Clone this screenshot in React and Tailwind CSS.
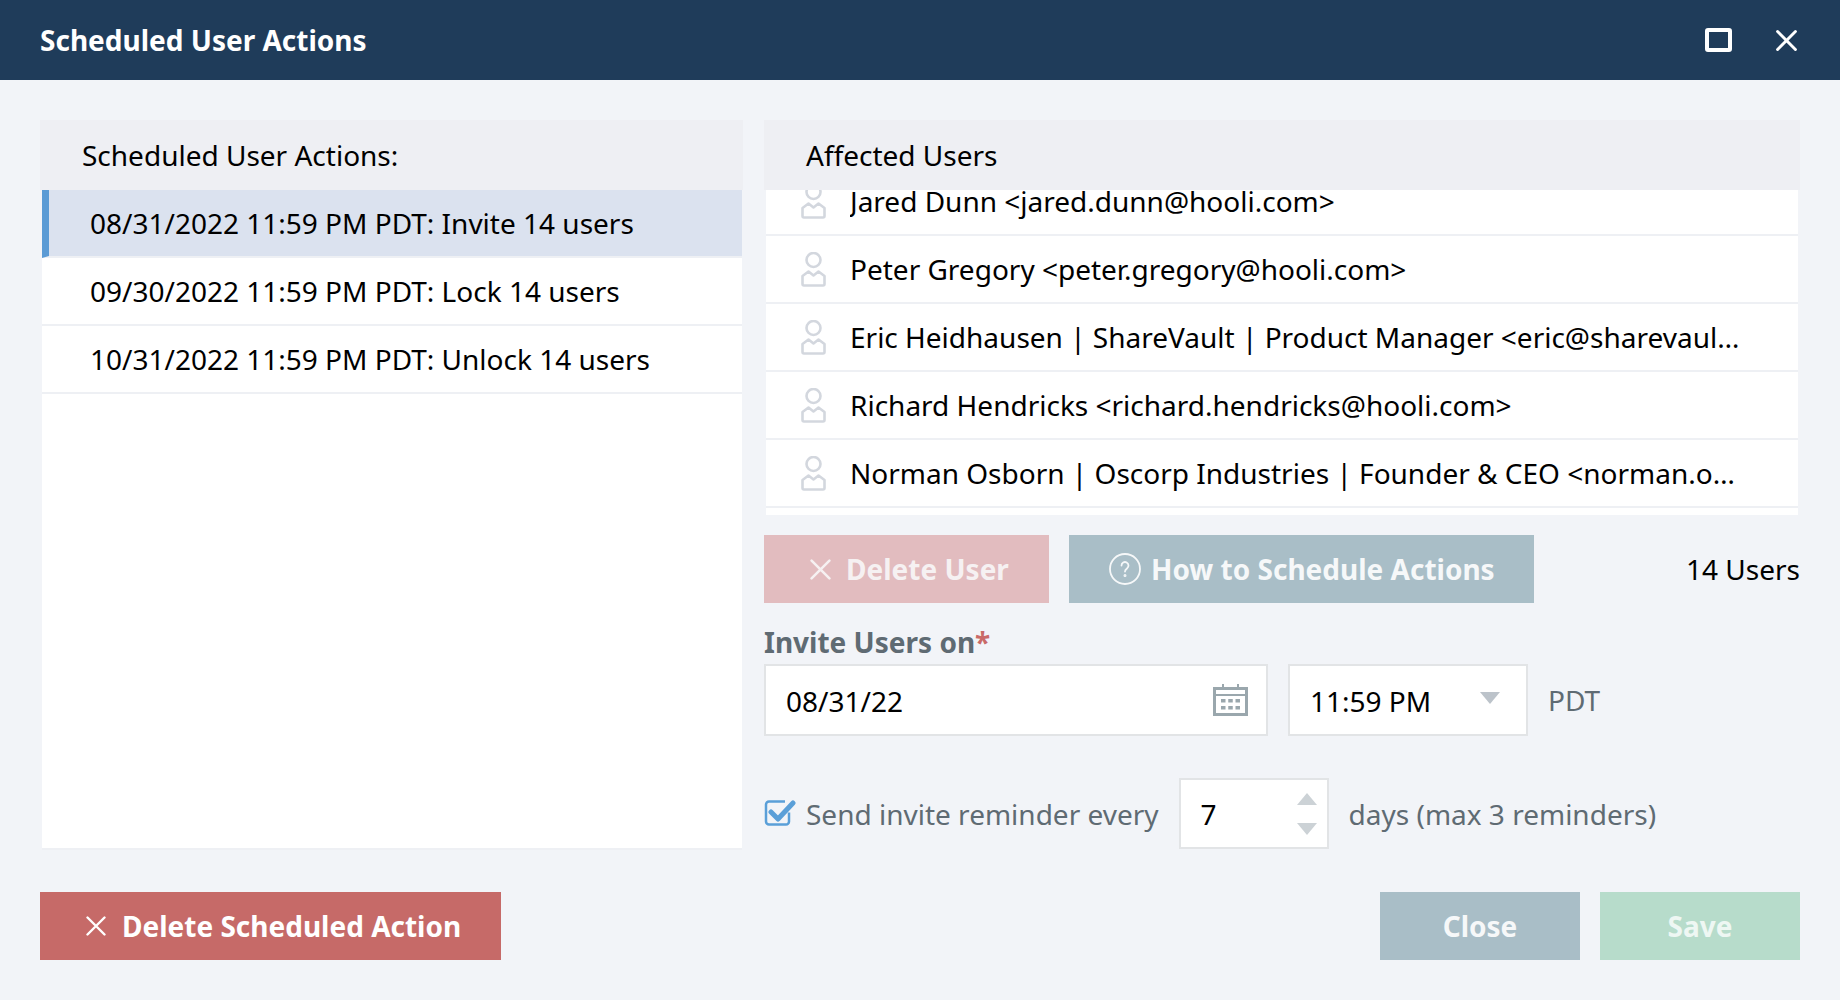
import React from "react";

const actions = [
  { label: "08/31/2022 11:59 PM PDT: Invite 14 users", selected: true },
  { label: "09/30/2022 11:59 PM PDT: Lock 14 users" },
  { label: "10/31/2022 11:59 PM PDT: Unlock 14 users" },
];

const users = [
  "Jared Dunn <jared.dunn@hooli.com>",
  "Peter Gregory <peter.gregory@hooli.com>",
  "Eric Heidhausen | ShareVault | Product Manager <eric@sharevault.com>",
  "Richard Hendricks <richard.hendricks@hooli.com>",
  "Norman Osborn | Oscorp Industries | Founder & CEO <norman.osborn@oscorp.com>",
];

const CrossIcon = ({ className, strokeWidth = 2.4 }) => (
  <svg className={className} viewBox="0 0 20 20" fill="none" stroke="currentColor" strokeWidth={strokeWidth} strokeLinecap="round">
    <path d="M1.5 1.5L18.5 18.5M18.500 1.5L1.5 18.5" />
  </svg>
);

const UserIcon = () => (
  <svg className="w-[25px] h-[35px] shrink-0" viewBox="0 0 25 35" fill="none" stroke="#d3d7de" strokeWidth="2.6" strokeLinejoin="round">
    <circle cx="12.5" cy="8" r="7" />
    <path d="M7.5 19.5L12.5 23.5L17.5 19.5L23.5 24V32a1.5 1.5 0 0 1-1.5 1.5H3a1.5 1.5 0 0 1-1.5-1.5V24Z" />
  </svg>
);

const CalendarIcon = () => (
  <svg className="w-[35px] h-[32px]" viewBox="0 0 35 32" fill="#9aa7ad">
    <path fillRule="evenodd" d="M0 3h9V0h2v3h13V0h2v3h9v29H0ZM3 6v4h29V6ZM3 12v17h29V12Z" />
    <path d="M8 15h4.500v3.500H8ZM15.250 15h4.500v3.500h-4.500ZM22.500 15h4.500v3.500h-4.500ZM8 22h4.500v3.500H8ZM15.250 22h4.500v3.500h-4.500ZM22.500 22h4.500v3.500h-4.500Z" />
  </svg>
);

const App = () => {
  return (
    <div className="w-full h-[1000px] flex flex-col bg-[#f2f4f8] text-[28px] text-black font-['Noto_Sans',sans-serif]">
      {/* Title bar */}
      <div className="h-[80px] shrink-0 bg-[#1f3c5a] flex items-center pl-10 pr-[43px] text-white">
        <h1 className="font-bold flex-1">Scheduled User Actions</h1>
        <div className="w-[27px] h-[24px] border-[4px] border-white rounded-[3px] mr-[44px]"></div>
        <CrossIcon className="w-[21px] h-[21px]" strokeWidth={2.8} />
      </div>

      <div className="flex-1 flex flex-col px-10 pt-10">
        <div className="flex gap-[21px] h-[730px]">
          {/* Left list */}
          <div className="w-[703px] flex flex-col">
            <div className="h-[70px] shrink-0 bg-[#eeeff3] flex items-center pl-[42px]">Scheduled User Actions:</div>
            <div className="flex-1 bg-white ml-[2px] mr-[1px] border-b-2 border-[#eef0f4]">
              {actions.map((action) => (
                <div
                  key={action.label}
                  className={
                    action.selected
                      ? "h-[68px] flex items-center bg-[#dbe2ef] border-l-[7px] border-l-[#5b9bd5] border-b-2 border-b-[#eef0f4] pl-[41px]"
                      : "h-[68px] flex items-center border-b-2 border-b-[#eef0f4] pl-[48px]"
                  }
                >
                  {action.label}
                </div>
              ))}
            </div>
          </div>

          {/* Right column */}
          <div className="w-[1036px] flex flex-col">
            <div className="h-[70px] shrink-0 bg-[#eeeff3] flex items-center pl-[42px]">Affected Users</div>
            <div className="h-[325px] shrink-0 bg-white mx-[2px] overflow-hidden">
              <div className="-mt-[22px]">
                {users.map((user) => (
                  <div key={user} className="h-[68px] flex items-center gap-[24px] pl-[35px] pr-[56px] border-b-2 border-b-[#eef0f4]">
                    <UserIcon />
                    <span className="truncate">{user}</span>
                  </div>
                ))}
              </div>
            </div>

            <div className="flex items-center mt-5 h-[68px] shrink-0 font-bold">
              <button className="w-[285px] h-full bg-[#e2bcbf] text-[#f6f1f2] flex items-center pl-[46px] gap-[15px]">
                <CrossIcon className="w-[21px] h-[21px]" strokeWidth={2.4} />
                Delete User
              </button>
              <button className="w-[465px] h-full ml-5 bg-[#a9bec7] text-[#f6f8f9] flex items-center pl-[40px] gap-[10px]">
                <svg className="w-[32px] h-[32px]" viewBox="0 0 32 32" fill="none" stroke="currentColor" strokeWidth="1.8">
                  <circle cx="16" cy="16" r="15" />
                  <path d="M12.500 12.500a3.500 3.500 0 1 1 5.500 2.900c-1.300.9-2 1.600-2 3.100" strokeLinecap="round" />
                  <circle cx="16" cy="22.500" r="0.600" />
                </svg>
                How to Schedule Actions
              </button>
              <span className="ml-auto font-normal">14 Users</span>
            </div>

            <div className="mt-[21px] h-[36px] mb-[4px] flex items-center font-bold text-[#5f6b73]">
              Invite Users on<span className="text-[#c96a68]">*</span>
            </div>

            <div className="flex items-center h-[72px] shrink-0">
              <div className="w-[504px] h-full bg-white border-2 border-[#e2e4e6] flex items-center justify-between pl-[20px] pr-[18px]">
                <span className="pt-[2px]">08/31/22</span>
                <CalendarIcon />
              </div>
              <div className="w-[240px] h-full ml-5 bg-white border-2 border-[#e2e4e6] flex items-center justify-between pl-[20px] pr-[26px]">
                <span className="pt-[2px]">11:59 PM</span>
                <div className="w-0 h-0 border-x-[10px] border-x-transparent border-t-[12px] border-t-[#bcc3ca] -mt-[4px]"></div>
              </div>
              <span className="ml-[20px] text-[#5f6b73]">PDT</span>
            </div>

            <div className="flex items-center h-[71px] shrink-0 mt-[42px] text-[#5f6b73]">
              <svg className="w-[32px] h-[28px] shrink-0 -mt-[2px]" viewBox="0 0 32 28" fill="none">
                <path d="M25 13.500V22.500a3 3 0 0 1-3 3H5a3 3 0 0 1-3-3V5.500a3 3 0 0 1 3-3H21" stroke="#5a9fd8" strokeWidth="2.500" />
                <path d="M7 13L14 20L29 4" stroke="#5a9fd8" strokeWidth="5" strokeLinecap="round" strokeLinejoin="round" />
              </svg>
              <span className="ml-[10px]">Send invite reminder every</span>
              <div className="w-[150px] h-full ml-5 bg-white border-2 border-[#e2e4e6] flex items-center justify-between pl-[20px] pr-[10px] text-black">
                <span>7</span>
                <div className="flex flex-col gap-[18px]">
                  <div className="w-0 h-0 border-x-[10px] border-x-transparent border-b-[12px] border-b-[#ccd2d6]"></div>
                  <div className="w-0 h-0 border-x-[10px] border-x-transparent border-t-[12px] border-t-[#ccd2d6]"></div>
                </div>
              </div>
              <span className="ml-5">days (max 3 reminders)</span>
            </div>
          </div>
        </div>

        {/* Footer */}
        <div className="flex items-center mt-[42px] h-[68px] shrink-0 font-bold text-white">
          <button className="w-[461px] h-full bg-[#c66a68] flex items-center pl-[46px] gap-[16px]">
            <CrossIcon className="w-[20px] h-[20px]" strokeWidth={2.4} />
            Delete Scheduled Action
          </button>
          <button className="w-[200px] h-full ml-auto bg-[#a9bec7] text-[#f6f8f9]">Close</button>
          <button className="w-[200px] h-full ml-5 bg-[#b7dccb] text-[#eef7f3]">Save</button>
        </div>
      </div>
    </div>
  );
};

export default App;
